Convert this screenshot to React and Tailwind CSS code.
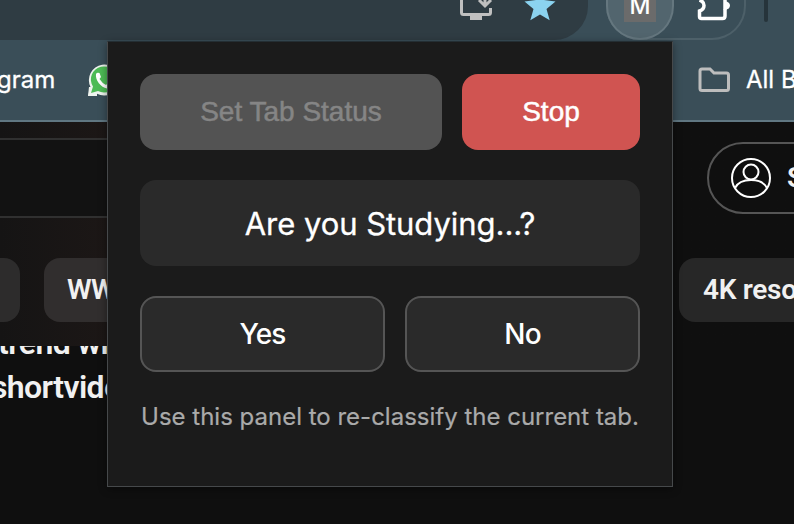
import React from "react";

function BrowserToolbar() {
  return (
    <div className="flex h-10 shrink-0 bg-[#3a4e58]">
      <div className="flex h-10 w-[588px] justify-end rounded-br-[34px] bg-[#2f3c43] pr-8">
        <svg className="mr-[31px] h-[22px] w-[34px]" viewBox="0 0 34 22" fill="none">
          <path d="M2.500 0V12.500Q2.500 14.500 4.500 14.500H29.500Q31.500 14.500 31.500 12.500V8" stroke="#c0c0c0" strokeWidth="3" />
          <path d="M11 15H23V20H11Z" fill="#c0c0c0" />
          <path d="M26 0V5M20 0L26 6L32 0" stroke="#c0c0c0" strokeWidth="3" />
        </svg>
        <svg className="h-[22px] w-[32px]" viewBox="0 0 32 22" fill="#8bd3f0">
          <path d="M0.500 1.500L12 0H20L31.500 1.500L22.500 9L25.700 20.300L16 14.500L6.300 20.300L9.500 9Z" />
        </svg>
      </div>
      <div className="ml-[18px] flex h-10 w-[140px] rounded-b-[34px] border-x-2 border-b-2 border-[#4d6069]">
        <div className="-ml-0.5 flex h-10 w-[68px] items-start justify-center rounded-b-[34px] border-x-2 border-b-2 border-[#65777f] bg-[#52656e]">
          <div className="h-[22px] w-8 bg-[#6b6b6b] text-center font-['Inter'] text-[23px] leading-[13px] font-medium text-white">M</div>
        </div>
        <svg className="ml-[23px] h-[22px] w-[34px]" viewBox="0 0 34 22" fill="none">
          <path d="M2.500 0C8.500 2 8.500 9 2.500 11V16.500Q2.500 18.500 4.500 18.500H25.500Q28 18.500 28 16V9.500" stroke="white" strokeWidth="3.500" />
          <path d="M28 0V10" stroke="white" strokeWidth="3.500" />
          <path d="M28 1Q33 2 33 5.500T28 10Z" fill="white" />
        </svg>
      </div>
      <div className="ml-[18px] h-[22px] w-1 rounded-b-sm bg-[#26343b]" />
    </div>
  );
}

function BookmarksBar() {
  return (
    <div className="flex h-[82px] shrink-0 items-center border-b-2 border-[#607782] bg-[#3a4e58] font-['Inter'] text-2xl text-white">
      <div className="w-[55px] shrink-0 whitespace-nowrap [-webkit-text-stroke:0.3px_white]"><span className="-ml-[3px]">gram</span></div>
      <svg className="ml-[33px] h-8 w-8 shrink-0" viewBox="0 0 32 32">
        <path d="M0 32L2.500 23A15.500 15.500 0 1 1 9 29.700Z" fill="#eef3ee" />
        <path d="M0 32L1 23H9V32Z" fill="#eef3ee" />
        <path d="M3 29L5 22.500A13 13 0 1 1 10 27Z" fill="#4dbb55" />
        <path d="M8 10Q9 8 11.500 9L13 13L11.500 15Q14 19 18 21L20 19L24 21Q23 25 19 24.500C13 23.500 7 16 8 10Z" fill="white" />
      </svg>
      <svg className="ml-[578px] h-[26px] w-[34px] shrink-0" viewBox="0 0 34 26" fill="none" stroke="#bdbdbd" strokeWidth="3">
        <path d="M4 2H12L16 6H28.500Q30.500 6 30.500 8V21.500Q30.500 23.500 28.500 23.500H4Q2 23.500 2 21.500V4Q2 2 4 2Z" />
      </svg>
      <div className="ml-[14px] shrink-0 whitespace-nowrap [-webkit-text-stroke:0.3px_white]">All B</div>
    </div>
  );
}

function VideoPage() {
  return (
    <div className="flex grow flex-col font-['Roboto'] text-[#f1f1f1]">
      <div className="h-[224px] shrink-0 bg-linear-to-r from-[#151414] via-[#1c1716] via-[108px] to-[#0f0f0f] to-[640px]">
        <div className="flex h-[136px] pt-4">
          <div className="h-20 w-[400px] shrink-0 border-y-2 border-[#303030] bg-[#121212]" />
          <div className="mt-1 ml-[307px] flex h-[72px] w-[200px] shrink-0 items-center rounded-l-full border-2 border-[#555] pl-[22px]">
            <svg className="h-10 w-10 shrink-0" viewBox="0 0 40 40" fill="none" stroke="white" strokeWidth="2">
              <circle cx="20" cy="20" r="19" />
              <circle cx="20" cy="14" r="7.500" />
              <path d="M4 30Q8 22 20 22T36 30" />
            </svg>
            <span className="ml-4 whitespace-nowrap text-[28px] font-semibold">S</span>
          </div>
        </div>
        <div className="flex h-16 text-[28px] leading-[64px] font-semibold whitespace-nowrap">
          <div className="w-5 shrink-0 rounded-r-2xl bg-[#2d2c2c]" />
          <div className="ml-6 w-[300px] shrink-0 rounded-2xl bg-[#312e2e] pl-[23px] tracking-tight">WW</div>
          <div className="ml-[335px] w-[220px] shrink-0 rounded-2xl bg-[#272727] pl-6 tracking-[-0.3px]">4K reso</div>
        </div>
      </div>
      <div className="h-[178px] shrink-0 overflow-hidden bg-[#0f0f0f] text-[32px] leading-[44px] font-semibold tracking-[-0.6px] whitespace-nowrap">
        <div className="-mt-[25px] -ml-0.5">trend wi</div>
        <div className="-ml-[9px]">shortvide</div>
      </div>
    </div>
  );
}

function StatusPopup() {
  return (
    <div className="absolute top-[41px] left-[107px] flex h-[446px] w-[566px] flex-col border border-t-[#242e33] border-[#46494b] bg-[#1b1b1b] px-8 pt-8 font-['Inter'] text-white shadow-[0_2px_8px_rgba(0,0,0,0.4)]">
      <div className="flex h-[76px] gap-5 font-['Liberation_Sans'] text-[28px]">
        <button className="w-[302px] rounded-2xl bg-[#535353] text-[#858585] [-webkit-text-stroke:0.5px_#858585]">Set Tab Status</button>
        <button className="w-[178px] rounded-2xl bg-[#d05451] [-webkit-text-stroke:0.5px_white]">Stop</button>
      </div>
      <div className="mt-[30px] flex h-[86px] items-center justify-center rounded-2xl bg-[#2a2a2a] pt-0.5 text-[31px] tracking-[-0.05px] [-webkit-text-stroke:0.3px_white]">Are you Studying...?</div>
      <div className="mt-[30px] flex h-[76px] gap-5 text-[28px] font-medium tracking-[-0.8px]">
        <button className="w-[245px] rounded-2xl border-2 border-[#555] bg-[#2a2a2a]">Yes</button>
        <button className="w-[235px] rounded-2xl border-2 border-[#555] bg-[#2a2a2a]">No</button>
      </div>
      <p className="mt-[29px] text-center text-2xl whitespace-nowrap text-[#aaa] [-webkit-text-stroke:0.2px_#aaa]">Use this panel to re-classify the current tab.</p>
    </div>
  );
}

export default function App() {
  return (
    <div className="relative flex h-[524px] w-[794px] flex-col overflow-hidden bg-[#0f0f0f]">
      <BrowserToolbar />
      <BookmarksBar />
      <VideoPage />
      <StatusPopup />
    </div>
  );
}
